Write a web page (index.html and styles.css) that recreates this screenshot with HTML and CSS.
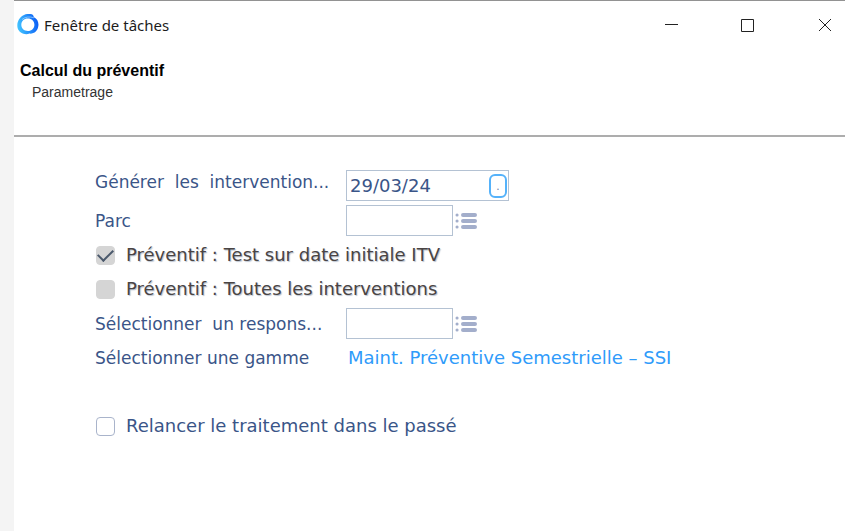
FILE: index.html
```html
<!DOCTYPE html>
<html lang="fr">
<head>
<meta charset="utf-8">
<title>Fenêtre de tâches</title>
<link rel="stylesheet" href="styles.css">
</head>
<body>
<div class="window">
  <header class="titlebar">
    <svg class="logo" viewBox="0 0 22 22" aria-hidden="true">
      <defs>
        <linearGradient id="ring" x1="0" y1="0.6" x2="1" y2="0.4">
          <stop offset="0" stop-color="#42c4ff"/>
          <stop offset="0.5" stop-color="#2590fb"/>
          <stop offset="1" stop-color="#0a5cf5"/>
        </linearGradient>
      </defs>
      <path fill="url(#ring)" fill-rule="evenodd" d="M7 1C10 -.5 14 -.5 16 1L17 3.300C20 4.500 21.800 8 21.400 11.500C21 17 17 20 12.500 19.600C8 21.500 2 19 .6 14C-.6 9 2 3 7 1ZM10.800 4.500C7 4.500 4.300 7.200 4.300 10.800C4.300 14.400 7 17 10.800 17C14.700 17 17.400 14.200 17.400 10.700C17.400 7.200 14.700 4.500 10.800 4.500Z"/>
      <path fill="none" stroke="#bfe6ff" stroke-width="0.6" d="M5 5.500Q10 1.500 17 3.800"/>
    </svg>
    <span class="caption">Fenêtre de tâches</span>
    <div class="controls">
      <button type="button" aria-label="Réduire"><svg viewBox="0 0 14 14"><path d="M1 6.500H14"/></svg></button>
      <button type="button" aria-label="Agrandir"><svg viewBox="0 0 14 14"><path d="M1.500 1.500H13.500V13.500H1.500Z"/></svg></button>
      <button type="button" aria-label="Fermer"><svg viewBox="0 0 14 14"><path d="M1 1L13 13M13 1L1 13"/></svg></button>
    </div>
  </header>
  <section class="heading">
    <h1>Calcul du préventif</h1>
    <p>Parametrage</p>
  </section>
  <form class="form">
    <div class="row field top">
      <label for="date">Générer  les  intervention...</label>
      <div class="datebox">
        <input id="date" type="text" value="29/03/24">
        <button type="button" aria-label="Calendrier">.</button>
      </div>
    </div>
    <div class="row field">
      <label for="parc">Parc</label>
      <input class="short" id="parc" type="text">
      <button class="pick" type="button" aria-label="Liste des parcs"><svg viewBox="0 0 22 16"><path d="M8 2H20M8 8H20M8 14H20"/><path class="dots" d="M2 2h.1M2 8h.1M2 14h.1"/></svg></button>
    </div>
    <div class="row check locked">
      <input id="initial" type="checkbox" checked disabled>
      <label for="initial">Préventif : Test sur date initiale ITV</label>
    </div>
    <div class="row check locked">
      <input id="all" type="checkbox" disabled>
      <label for="all">Préventif : Toutes les interventions</label>
    </div>
    <div class="row field">
      <label for="resp">Sélectionner  un respons...</label>
      <input class="short" id="resp" type="text">
      <button class="pick" type="button" aria-label="Liste des responsables"><svg viewBox="0 0 22 16"><path d="M8 2H20M8 8H20M8 14H20"/><path class="dots" d="M2 2h.1M2 8h.1M2 14h.1"/></svg></button>
    </div>
    <div class="row field">
      <span class="label">Sélectionner une gamme</span>
      <a class="range" href="#">Maint. Préventive Semestrielle – SSI</a>
    </div>
    <div class="row check last">
      <input id="past" type="checkbox">
      <label for="past">Relancer le traitement dans le passé</label>
    </div>
  </form>
</div>
</body>
</html>
```
FILE: styles.css
```css
* {
  box-sizing: border-box;
}

body {
  margin: 0;
  padding-left: 14px;
  background: #f4f4f4;
}

.window {
  min-height: 100vh;
  background: #fff;
  border-top: 1px solid #929292;
}

.titlebar {
  display: flex;
  align-items: center;
  height: 48px;
  padding-left: 3px;
}

.logo {
  width: 22px;
  height: 22px;
}

.caption {
  margin-left: 5px;
  font: 15px/20px "Noto Sans", "Open Sans", sans-serif;
  color: #1c1c1c;
}

.controls {
  display: flex;
  margin-left: auto;
}

.controls button {
  display: flex;
  align-items: center;
  justify-content: center;
  width: 76px;
  height: 48px;
  padding: 0;
  border: 0;
  background: none;
}

.controls button:last-child {
  width: 40px;
  margin-left: 20px;
}

.controls svg {
  width: 14px;
  height: 14px;
  fill: none;
  stroke: #222;
}

.heading {
  height: 88px;
  padding: 12px 6px 0;
  border-bottom: 2px solid #adadad;
  font-family: "Liberation Sans", Arial, sans-serif;
}

.heading h1 {
  margin: 0;
  font-size: 16px;
  line-height: 20px;
  color: #000;
}

.heading p {
  margin: 0;
  padding-left: 12px;
  font-size: 14px;
  line-height: 22px;
  color: #333;
}

.form {
  display: flex;
  flex-direction: column;
  gap: 4px;
  padding: 33px 0 0 81px;
  font: 18px/24px "DejaVu Sans", Verdana, sans-serif;
  color: #3a5588;
}

.row {
  display: flex;
  align-items: center;
  min-height: 30px;
}

.top {
  align-items: flex-start;
}

.field > label,
.label {
  width: 251px;
  font-size: 17px;
  white-space: pre;
}

.form input[type="text"] {
  height: 31px;
  padding: 0 4px;
  border: 1px solid #b4c2d3;
  background: #fff;
  font: inherit;
  color: #3a5588;
}

.form .short {
  width: 107px;
}

.datebox {
  display: flex;
  align-items: center;
  width: 163px;
  height: 31px;
  padding-right: 1px;
  border: 1px solid #b4c2d3;
}

.form .datebox input {
  flex: 1;
  min-width: 0;
  height: 29px;
  padding: 0 3px;
  border: 0;
}

.datebox button {
  width: 18px;
  height: 24px;
  padding: 0;
  border: 2px solid #55b2fa;
  border-radius: 6px;
  background: #fff;
  font-size: 12px;
  color: #6f86ab;
}

.pick {
  display: flex;
  margin-left: 2px;
  padding: 0;
  border: 0;
  background: none;
}

.pick svg {
  width: 22px;
  height: 16px;
  fill: none;
  stroke: #a3aecb;
  stroke-width: 4;
  stroke-linecap: round;
}

.pick .dots {
  stroke-width: 3;
}

.range {
  padding-left: 2px;
  color: #2f9bfa;
  text-decoration: none;
}

.check {
  gap: 11px;
}

.check input {
  appearance: none;
  width: 19px;
  height: 19px;
  margin: 0 0 0 1px;
  border: 1px solid #a9b4cb;
  border-radius: 4px;
  background: #fff;
}

.check input:disabled {
  border-color: #d5d5d5;
  background: #d5d5d5;
}

.check input:checked {
  display: flex;
  align-items: center;
  justify-content: center;
}

.check input:checked::before {
  content: "";
  width: 13px;
  height: 7px;
  margin-bottom: 4px;
  border: solid #4b596c;
  border-width: 0 0 2px 2px;
  transform: rotate(-45deg);
}

.locked {
  color: #4a4444;
  text-shadow: 1px 1px 1px #b9c3d0;
}

.last {
  margin-top: 34px;
}
```
